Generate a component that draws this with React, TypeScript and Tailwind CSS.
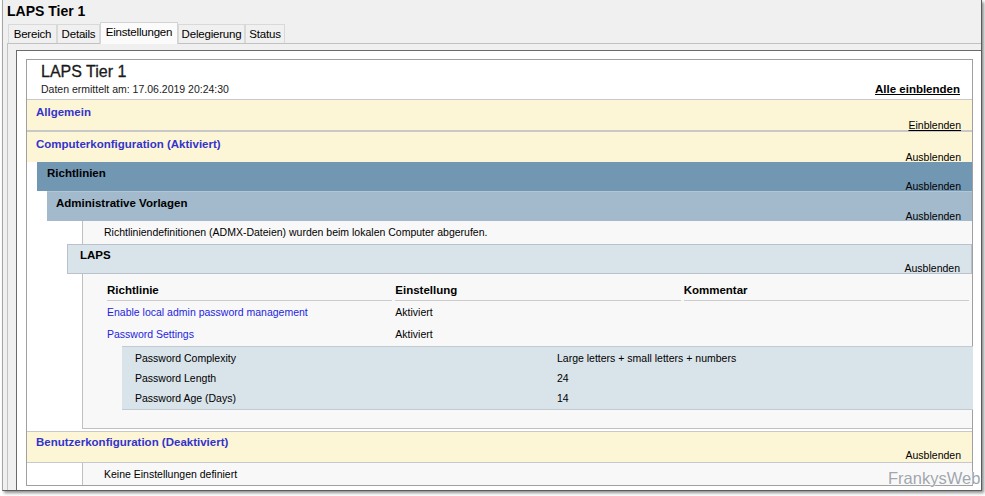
import React from "react";

type BarProps = {
  cls: string;
  title: string;
  titleCls: string;
  action: string;
  actionCls: string;
  underline?: boolean;
};

function Bar({ cls, title, titleCls, action, actionCls, underline }: BarProps) {
  return (
    <div className={`flex flex-col ${cls}`}>
      <div className={`leading-[14px] font-bold text-[11.5px] ${titleCls}`}>{title}</div>
      <div
        className={`mt-auto self-end pr-[11px] leading-[13px] text-black text-[10.5px] ${
          underline ? "underline" : ""
        } ${actionCls}`}
      >
        {action}
      </div>
    </div>
  );
}

function Tab({ label, w, selected }: { label: string; w: string; selected?: boolean }) {
  if (selected) {
    return (
      <div
        className={`${w} h-[22px] -mb-[1px] relative z-10 bg-[#fbfbfb] border border-b-0 border-[#d4d4d4] text-center leading-[19px] text-[11.5px] tracking-[-0.2px] text-black`}
      >
        {label}
      </div>
    );
  }
  return (
    <div
      className={`${w} h-[19px] bg-[#f0f0f0] border border-b-0 border-[#d9d9d9] text-center leading-[19px] text-[11.5px] tracking-[-0.2px] text-black`}
    >
      {label}
    </div>
  );
}

export default function App() {
  return (
    <div className="relative w-[985px] h-[496px] bg-white overflow-hidden font-['Liberation_Sans',Arial,sans-serif] text-black">
      {/* Window */}
      <div className="ml-[2px] w-[980px] h-[491px] bg-[#f0f0f0] border-l border-l-[#a5a5a5] border-r border-r-[#5a5a5a] border-b border-b-[#5a5a5a] shadow-[2px_2px_3px_rgba(0,0,0,0.45)] flex flex-col">
        {/* Title */}
        <div className="h-[22px] pl-[4px] pt-[1px] text-[14px] font-bold leading-[21px] text-black">
          LAPS Tier 1
        </div>
        {/* Tabs */}
        <div className="h-[21px] flex items-end pl-[5px]">
          <Tab label="Bereich" w="w-[49px]" />
          <Tab label="Details" w="w-[43px]" />
          <Tab label="Einstellungen" w="w-[78px]" selected />
          <Tab label="Delegierung" w="w-[67px]" />
          <Tab label="Status" w="w-[40px]" />
        </div>
        {/* Tab page */}
        <div className="flex-1 min-h-0 ml-[4px] border-l border-t border-[#c2c2c2] pt-[6px] pl-[8px] flex flex-col">
          {/* Browser panel */}
          <div className="flex-1 min-h-0 border-l border-t border-[#6a6a6a] bg-white pt-[8px] pl-[9px] overflow-hidden">
            {/* Report */}
            <div className="w-[947px] border border-[#a0a0a0] bg-white text-[10.5px]">
              {/* Header */}
              <div className="h-[39px] pl-[14px] pr-[12px] pt-[2px]">
                <div className="text-[16px] leading-[20px] text-[#1a1a1a] [-webkit-text-stroke:0.3px_#1a1a1a]">LAPS Tier 1</div>
                <div className="mt-[1px] h-[14px] flex items-center justify-between">
                  <span className="text-[10.5px] text-[#1a1a1a]">Daten ermittelt am: 17.06.2019 20:24:30</span>
                  <span className="text-[11.5px] font-bold underline">Alle einblenden</span>
                </div>
              </div>

              {/* Allgemein */}
              <Bar
                cls="h-[32px] border-y border-[#c8c8c8] bg-[#fdf6d6] pl-[9px] pt-[5px]"
                title="Allgemein"
                titleCls="text-[#3333cc]"
                action="Einblenden"
                actionCls="-mb-[2px]"
                underline
              />

              {/* Computerkonfiguration */}
              <Bar
                cls="h-[31px] border-t border-[#c8c8c8] bg-[#fdf6d6] pl-[9px] pt-[5px]"
                title="Computerkonfiguration (Aktiviert)"
                titleCls="text-[#3333cc]"
                action="Ausblenden"
                actionCls="-mb-[1px]"
              />

              {/* Richtlinien */}
              <Bar
                cls="ml-[10px] h-[29px] bg-[#7297b3] pl-[10px] pt-[4px]"
                title="Richtlinien"
                titleCls="text-black"
                action="Ausblenden"
                actionCls="-mb-[2px]"
              />

              {/* Administrative Vorlagen */}
              <Bar
                cls="ml-[20px] h-[30px] bg-[#a2bacc] border-t border-[#b3c6d4] pl-[9px] pt-[4px]"
                title="Administrative Vorlagen"
                titleCls="text-black"
                action="Ausblenden"
                actionCls="-mb-[1px]"
              />

              {/* ADMX line */}
              <div className="ml-[55px] h-[23px] border-l border-[#c0c0c0] bg-[#f8f8f8] pl-[21px] leading-[23px]">
                Richtliniendefinitionen (ADMX-Dateien) wurden beim lokalen Computer abgerufen.
              </div>

              {/* LAPS */}
              <Bar
                cls="ml-[40px] h-[30px] border border-[#b9c2ca] bg-[#d9e3ea] pl-[12px] pt-[3px]"
                title="LAPS"
                titleCls="text-black"
                action="Ausblenden"
                actionCls="-mb-[2px]"
              />

              {/* LAPS content */}
              <div className="ml-[55px] border-l border-b border-[#c0c0c0] bg-[#f8f8f8] pl-[24px] pr-[3px] pt-[6px] pb-[18px]">
                <div className="grid grid-cols-3 gap-x-[3px]">
                  <div className="h-[21px] border-b border-[#cccccc] font-bold text-[11.5px] leading-[20px]">Richtlinie</div>
                  <div className="h-[21px] border-b border-[#cccccc] font-bold text-[11.5px] leading-[20px]">Einstellung</div>
                  <div className="h-[21px] border-b border-[#cccccc] font-bold text-[11.5px] leading-[20px]">Kommentar</div>

                  <div className="h-[22px] leading-[22px] text-[#2424e0]">Enable local admin password management</div>
                  <div className="h-[22px] leading-[22px]">Aktiviert</div>
                  <div className="h-[22px]" />

                  <div className="h-[22px] leading-[22px] text-[#2424e0]">Password Settings</div>
                  <div className="h-[22px] leading-[22px]">Aktiviert</div>
                  <div className="h-[22px]" />
                </div>
                <div className="mt-[1px] ml-[15px] w-[851px] border-y border-[#c3cbd2] bg-[#d9e3ea] py-[1px] pl-[13px]">
                  <div className="grid grid-cols-[422px_1fr] leading-[20px]">
                    <div>Password Complexity</div>
                    <div>Large letters + small letters + numbers</div>
                    <div>Password Length</div>
                    <div>24</div>
                    <div>Password Age (Days)</div>
                    <div>14</div>
                  </div>
                </div>
              </div>

              {/* Benutzerkonfiguration */}
              <Bar
                cls="mt-[2px] h-[32px] border-y border-[#c8c8c8] bg-[#fdf6d6] pl-[9px] pt-[3px]"
                title="Benutzerkonfiguration (Deaktiviert)"
                titleCls="text-[#3333cc]"
                action="Ausblenden"
                actionCls="mb-[0px]"
              />

              {/* Keine Einstellungen */}
              <div className="ml-[55px] h-[22px] border-l border-[#c0c0c0] bg-[#f8f8f8] pl-[21px] leading-[22px]">
                Keine Einstellungen definiert
              </div>
            </div>
          </div>
        </div>
      </div>

      {/* Watermark */}
      <div className="absolute left-[888px] top-[470px] text-[16.5px] leading-none text-[#a0a6ad] [text-shadow:0_0_2px_#ffffff,0_0_1px_#ffffff]">
        FrankysWeb
      </div>
    </div>
  );
}
